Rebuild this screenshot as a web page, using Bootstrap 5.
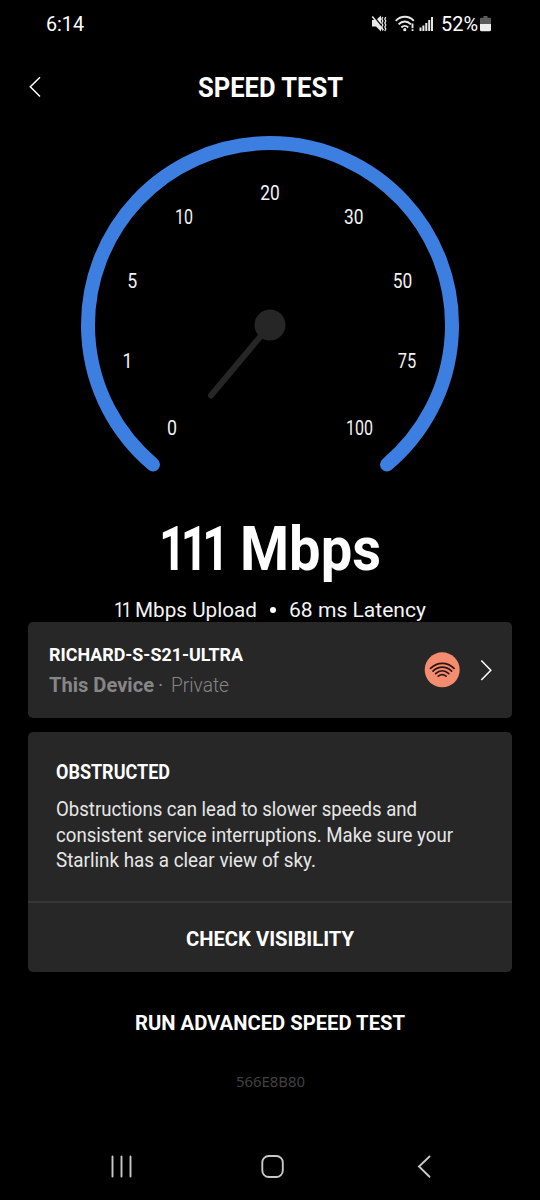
<!DOCTYPE html>
<html lang="en">
<head>
<meta charset="utf-8">
<meta name="viewport" content="width=device-width, initial-scale=1">
<title>Speed Test</title>
<link href="https://cdn.jsdelivr.net/npm/bootstrap@5.3.0/dist/css/bootstrap.min.css" rel="stylesheet">
<style>
  body { background:#000; color:#fff; font-family:Roboto,"Liberation Sans",sans-serif; }
  .phone { width:540px; height:1200px; overflow:hidden; }
  .fit { display:inline-block; white-space:nowrap; text-align:left; transform-origin:0 50%; }
  .status-bar { height:48px; padding:0 49px 0 46px; font-size:20px; line-height:48px; }
  .title-bar { height:78px; display:grid; grid-template-columns:70px 1fr 70px; }
  .title-bar h1 { font-size:27.5px; line-height:79px; font-weight:700; margin:0; }
  .dial { height:366px; }
  .dial text { fill:#f2f2f2; font-size:19.5px; text-anchor:middle; }
  .result { font-size:61px; line-height:72px; font-weight:700; margin-top:21px; gap:16px; }
  .result .ones { letter-spacing:-7px; }
  .sub { font-size:20px; line-height:24px; color:#f4f4f4; margin-top:12px; gap:13px; height:25px; }
  .sub .ones { letter-spacing:-2.5px; margin-right:5px; }
  .dot { width:6px; height:6px; border-radius:50%; background:#fff; }
  .panel { background:#272727; border-radius:5px; margin:0 28px; }
  .device { height:96px; padding:0 20px 0 21px; }
  .device .name { font-size:19px; line-height:24px; font-weight:700; }
  .device .who { font-size:20px; line-height:24px; color:#868686; margin-top:6px; }
  .notice { margin-top:14px; height:240px; }
  .notice .copy { height:169px; padding:28px 28px 0; }
  .notice h2 { font-size:19.5px; line-height:25px; font-weight:700; margin:0 0 12px; }
  .notice p { font-size:19.5px; line-height:25.5px; color:#e6e6e6; margin:0; }
  .notice .action { border-top:2px solid #363636; height:71px; padding-top:2px; }
  .flat { background:none; border:0; color:#fff; font-weight:700; font-size:20.5px; line-height:24px; padding:0; }
  .advanced { margin-top:38.5px; }
  .build { font:15px/20px "Noto Sans",sans-serif; color:#414141; margin-top:34px; }
</style>
</head>
<body>
<main class="phone d-flex flex-column">
  <div class="status-bar d-flex justify-content-between">
    <div><span class="fit" data-w="38">6:14</span></div>
    <div class="d-flex align-items-center">
      <svg width="70" height="24" viewBox="371 12 70 24" fill="none" stroke="#e8e8e8">
        <path d="M372 20h4l5-4.500v16l-5-5h-4z" fill="#e8e8e8" stroke="none"/>
        <path d="M373 15.500l11.500 14" stroke="#000" stroke-width="1.500"/>
        <path d="M372.300 16.500l11 13.500" stroke-width="1.500"/>
        <path d="M382.800 17l-1 2 1 2-1 2 1 2-1 2 1 3.500M385.800 17l-1 2 1 2-1 2 1 2-1 2 1 2-1 2" stroke-width="1.300"/>
        <path d="M395.800 20.800c5-5.400 13.200-5.400 18 0M398.600 24.300c3.600-3.800 8.800-3.800 12.300 0M401.400 27.500c2-2.200 4.800-2.200 6.800 0" stroke-width="1.900"/>
        <circle cx="404.800" cy="29.700" r="1.600" fill="#e8e8e8" stroke="none"/>
        <path d="M412.500 23.500v4.700M412.500 29.300v1.700" stroke-width="1.900"/>
        <path d="M420.500 31v-3.500M423.400 31v-5.500M426.300 31v-8M429.200 31v-11M432 31V17" stroke-width="2"/>
      </svg>
      <span class="fit" data-w="37">52%</span>
      <svg class="ms-1 me-n1" width="11" height="18" viewBox="0 0 11 18" style="margin-left:2px!important">
        <path d="M3.500 1h4v1.800h2.500a1 1 0 0 1 1 1V9H0V3.800a1 1 0 0 1 1-1h2.500z" fill="#5c5c5c"/>
        <path d="M0 9h11v5.800a1.500 1.500 0 0 1-1.500 1.500h-8A1.500 1.500 0 0 1 0 14.800z" fill="#eee"/>
      </svg>
    </div>
  </div>

  <header class="title-bar text-center">
    <svg width="70" height="78" viewBox="0 48 70 78" fill="none" stroke="#fff" stroke-width="1.500"><path d="M40 77.300l-9.700 9.500 9.700 9.700"/></svg>
    <h1><span class="fit" data-w="145">SPEED TEST</span></h1>
  </header>

  <svg class="dial flex-shrink-0" width="540" height="366" viewBox="0 126 540 366">
    <path d="M153 464.500A182 182 0 1 1 387 464.500" fill="none" stroke="#3d7fe0" stroke-width="14" stroke-linecap="round"/>
    <path d="M211 395.500L270 325" stroke="#262626" stroke-width="6" stroke-linecap="round"/>
    <circle cx="270" cy="325" r="15.500" fill="#262626"/>
    <text x="172" y="434.500" textLength="10" lengthAdjust="spacingAndGlyphs">0</text>
    <text x="127.500" y="367.500" textLength="10" lengthAdjust="spacingAndGlyphs">1</text>
    <text x="132.300" y="287.500" textLength="10" lengthAdjust="spacingAndGlyphs">5</text>
    <text x="184" y="223.500" textLength="18" lengthAdjust="spacingAndGlyphs">10</text>
    <text x="270" y="199.800" textLength="19.500" lengthAdjust="spacingAndGlyphs">20</text>
    <text x="353.800" y="223.500" textLength="19.500" lengthAdjust="spacingAndGlyphs">30</text>
    <text x="402.500" y="287.500" textLength="19.500" lengthAdjust="spacingAndGlyphs">50</text>
    <text x="407" y="367.500" textLength="18.500" lengthAdjust="spacingAndGlyphs">75</text>
    <text x="359.500" y="434.500" textLength="27" lengthAdjust="spacingAndGlyphs">100</text>
  </svg>

  <div class="result d-flex justify-content-center"><span class="fit ones" data-w="65">111</span><span class="fit" data-w="141">Mbps</span></div>
  <div class="sub d-flex justify-content-center align-items-center">
    <div class="d-flex"><span class="fit ones" data-w="15.5">11</span><span class="fit" data-w="122">Mbps Upload</span></div><i class="dot"></i><span class="fit" data-w="137">68 ms Latency</span>
  </div>

  <a class="panel device d-flex align-items-center text-white text-decoration-none flex-shrink-0">
    <div class="flex-grow-1">
      <div class="name"><span class="fit" data-w="194">RICHARD-S-S21-ULTRA</span></div>
      <div class="who d-flex"><b class="fit" data-w="105">This Device</b><span class="ps-1 pe-2">·</span><span class="fit fw-light" data-w="58">Private</span></div>
    </div>
    <svg width="68" height="36" viewBox="424 652 68 36" fill="none">
      <circle cx="442.200" cy="669.800" r="17.500" fill="#f58b6f"/>
      <g stroke="#2a1712" stroke-width="1.700" stroke-linecap="round">
        <path d="M430.500 668.300c7-6.600 16.600-6.600 23.600 0M433 671.100c5.600-5.200 13-5.200 18.600 0M435.600 673.700c4-3.700 9.200-3.700 13.200 0M438.300 676.200c2.400-2 5.400-2 7.800 0"/>
      </g>
      <path d="M481.300 660.500l9.500 9.700-9.500 9.700" stroke="#fff" stroke-width="1.500"/>
    </svg>
  </a>

  <section class="panel notice flex-shrink-0">
    <div class="copy">
      <h2><span class="fit" data-w="114">OBSTRUCTED</span></h2>
      <p><span class="fit" data-w="361">Obstructions can lead to slower speeds and</span><br><span class="fit" data-w="397">consistent service interruptions. Make sure your</span><br><span class="fit" data-w="260">Starlink has a clear view of sky.</span></p>
    </div>
    <div class="action d-flex align-items-center justify-content-center"><button class="flat"><span class="fit" data-w="168">CHECK VISIBILITY</span></button></div>
  </section>

  <div class="advanced text-center"><button class="flat"><span class="fit" data-w="270">RUN ADVANCED SPEED TEST</span></button></div>
  <div class="build text-center"><span class="fit" data-w="69">566E8B80</span></div>

  <nav class="mt-auto">
    <svg class="d-block" width="540" height="70" viewBox="0 1130 540 70" fill="none" stroke="#c8c8c8" stroke-width="1.900" stroke-linecap="round">
      <path d="M112.500 1156.500v20M121.500 1156.500v20M130.500 1156.500v20"/>
      <rect x="262.300" y="1156" width="20.500" height="21" rx="6.500"/>
      <path d="M429.500 1156.500l-10.500 10 10.500 10.300"/>
    </svg>
  </nav>
</main>
<script src="https://cdn.jsdelivr.net/npm/bootstrap@5.3.0/dist/js/bootstrap.bundle.min.js"></script>
<script>
  // Condense or widen each label to the width set in data-w.
  const labels = [...document.querySelectorAll('.fit')].map(el => [el, el.getBoundingClientRect().width]);
  labels.forEach(([el, natural]) => {
    const w = +el.dataset.w;
    el.style.width = w + 'px';
    el.style.transform = 'scaleX(' + w / natural + ')';
  });
</script>
</body>
</html>
